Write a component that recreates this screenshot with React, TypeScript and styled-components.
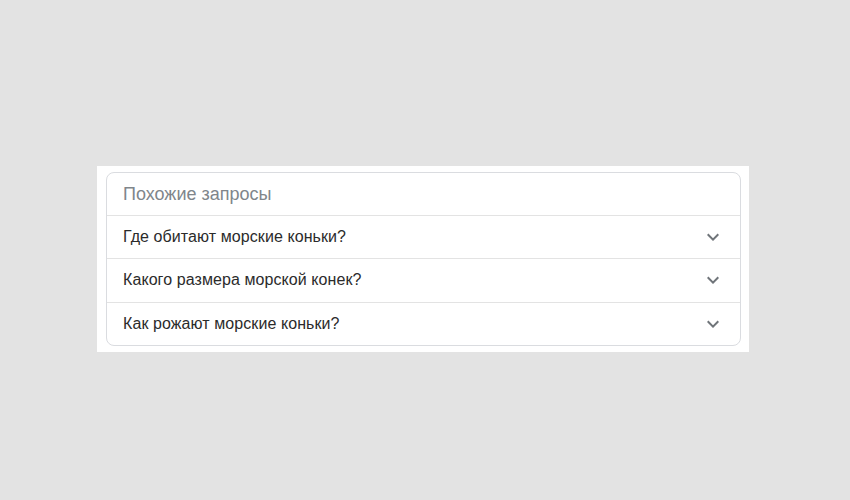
import React from "react";
import styled, { createGlobalStyle } from "styled-components";

const Global = createGlobalStyle`
  html, body { margin: 0; padding: 0; background: #e3e3e3; }
  body { font-family: Arial, "Liberation Sans", sans-serif; }
`;

const Page = styled.div`
  padding: 166px 0 0 97px;
`;

const Panel = styled.div`
  width: 652px;
  box-sizing: border-box;
  background: #ffffff;
  padding: 6px 8px 6px 9px;
`;

const Card = styled.div`
  border: 1px solid #dadce0;
  border-radius: 8px;
  overflow: hidden;
`;

const Header = styled.div`
  height: 42px;
  display: flex;
  align-items: center;
  padding: 0 16px;
  font-size: 18px;
  color: #80868b;
`;

const Row = styled.div`
  height: 43.33px;
  box-sizing: border-box;
  border-top: 1px solid #e3e3e3;
  display: flex;
  align-items: center;
  justify-content: space-between;
  padding: 0 16px;
  font-size: 16px;
  letter-spacing: 0.08px;
  color: #2b2b2b;
`;

const Chevron = styled.svg`
  width: 24px;
  height: 24px;
  margin-right: -1px;
  fill: #70757a;
`;

const items = [
  "Где обитают морские коньки?",
  "Какого размера морской конек?",
  "Как рожают морские коньки?",
];

export default function App() {
  return (
    <>
      <Global />
      <Page>
        <Panel>
          <Card>
            <Header>Похожие запросы</Header>
            {items.map((t) => (
              <Row key={t}>
                <span>{t}</span>
                <Chevron viewBox="0 0 24 24">
                  <path d="M16.59 8.59 12 13.17 7.41 8.59 6 10l6 6 6-6z" />
                </Chevron>
              </Row>
            ))}
          </Card>
        </Panel>
      </Page>
    </>
  );
}
